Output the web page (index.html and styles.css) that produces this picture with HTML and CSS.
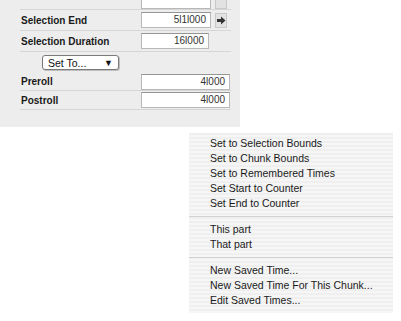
FILE: index.html
```html
<!DOCTYPE html>
<html lang="en">
<head>
    <meta charset="UTF-8">
    <title>Selection settings</title>
    <link rel="stylesheet" href="styles.css">
</head>

<body>
    <!-- time fields panel -->
    <div class="panel">
        <div class="row row-top">
            <span class="label"></span>
            <span class="field w70"></span>
            <span class="jump"></span>
        </div>
        <div class="row">
            <span class="label">Selection End</span>
            <span class="field w70">5l1l000</span>
            <span class="jump">
                <svg width="9" height="9" viewBox="0 0 9 9"><path d="M0 3h4V0.5L8.5 4.5 4 8.5V6H0z" fill="#333"/></svg>
            </span>
        </div>
        <div class="row">
            <span class="label">Selection Duration</span>
            <span class="field w68">16l000</span>
        </div>
        <div class="row row-popup">
            <span class="popup">Set To...<span class="caret">▼</span></span>
        </div>
        <div class="row row-pre">
            <span class="label">Preroll</span>
            <span class="field w89">4l000</span>
        </div>
        <div class="row row-post">
            <span class="label">Postroll</span>
            <span class="field w89">4l000</span>
        </div>
    </div>

    <!-- popup menu -->
    <ul class="menu">
        <li>Set to Selection Bounds</li>
        <li>Set to Chunk Bounds</li>
        <li>Set to Remembered Times</li>
        <li>Set Start to Counter</li>
        <li>Set End to Counter</li>
        <li class="sep"></li>
        <li>This part</li>
        <li>That part</li>
        <li class="sep"></li>
        <li>New Saved Time...</li>
        <li>New Saved Time For This Chunk...</li>
        <li>Edit Saved Times...</li>
    </ul>
</body>
</html>
```

FILE: styles.css
```css
body{
    margin: 0;
    background: #fff;
    font-family: "Liberation Sans", Arial, sans-serif;
    color: #111;
}

.panel{
    width: 240px;
    height: 127px;
    background: #ededed;
    overflow: hidden;
}
.row{
    display: flex;
    align-items: center;
    height: 20px;
    width: 211px;
    margin-left: 20px;
    border-bottom: 1px solid #d6d6d6;
}
.row-top{
    height: 9px;
    align-items: flex-end;
}
.row-popup{
    height: 21px;
    border-bottom: none;
}
.row-pre{
    height: 17px;
}
.row-post{
    height: 18px;
}
.label{
    width: 120px;
    padding-left: 1px;
    font-size: 10px;
    font-weight: bold;
    color: #1a1a1a;
}
.field{
    box-sizing: border-box;
    height: 16px;
    flex: none;
    background: #fff;
    border: 1px solid #b8b8b8;
    border-top-color: #959595;
    padding-right: 4px;
    text-align: right;
    font-size: 10px;
    line-height: 14px;
    color: #333;
}
.w70{ width: 70px; }
.w68{ width: 68px; }
.w89{ width: 89px; }
.jump{
    box-sizing: border-box;
    width: 12px;
    height: 15px;
    margin-left: 4px;
    background: #e2e2e2;
    border: 1px solid #c8c8c8;
    display: flex;
    align-items: center;
    justify-content: center;
}
.popup{
    box-sizing: border-box;
    display: flex;
    align-items: center;
    width: 77px;
    height: 15px;
    margin-left: 22px;
    padding-left: 5px;
    background: #fff;
    border: 1px solid #7a7a7a;
    border-radius: 3px;
    box-shadow: 1px 1px 0 #bdbdbd;
    font-size: 10.5px;
}
.caret{
    margin-left: auto;
    margin-right: 5px;
    font-size: 9px;
}

.menu{
    list-style: none;
    width: 204px;
    margin: 6px 0 0 189px;
    padding: 3px 0 5px;
    background: repeating-linear-gradient(#efefef 0 2px, #f6f6f6 2px 4px);
    font-size: 10.5px;
    color: #1a1a1a;
}
.menu li{
    height: 15px;
    line-height: 15px;
    padding-left: 21px;
}
.menu .sep{
    height: 0;
    margin: 5px 0;
    padding: 0;
    border-top: 1px solid #d2d2d2;
}
```
